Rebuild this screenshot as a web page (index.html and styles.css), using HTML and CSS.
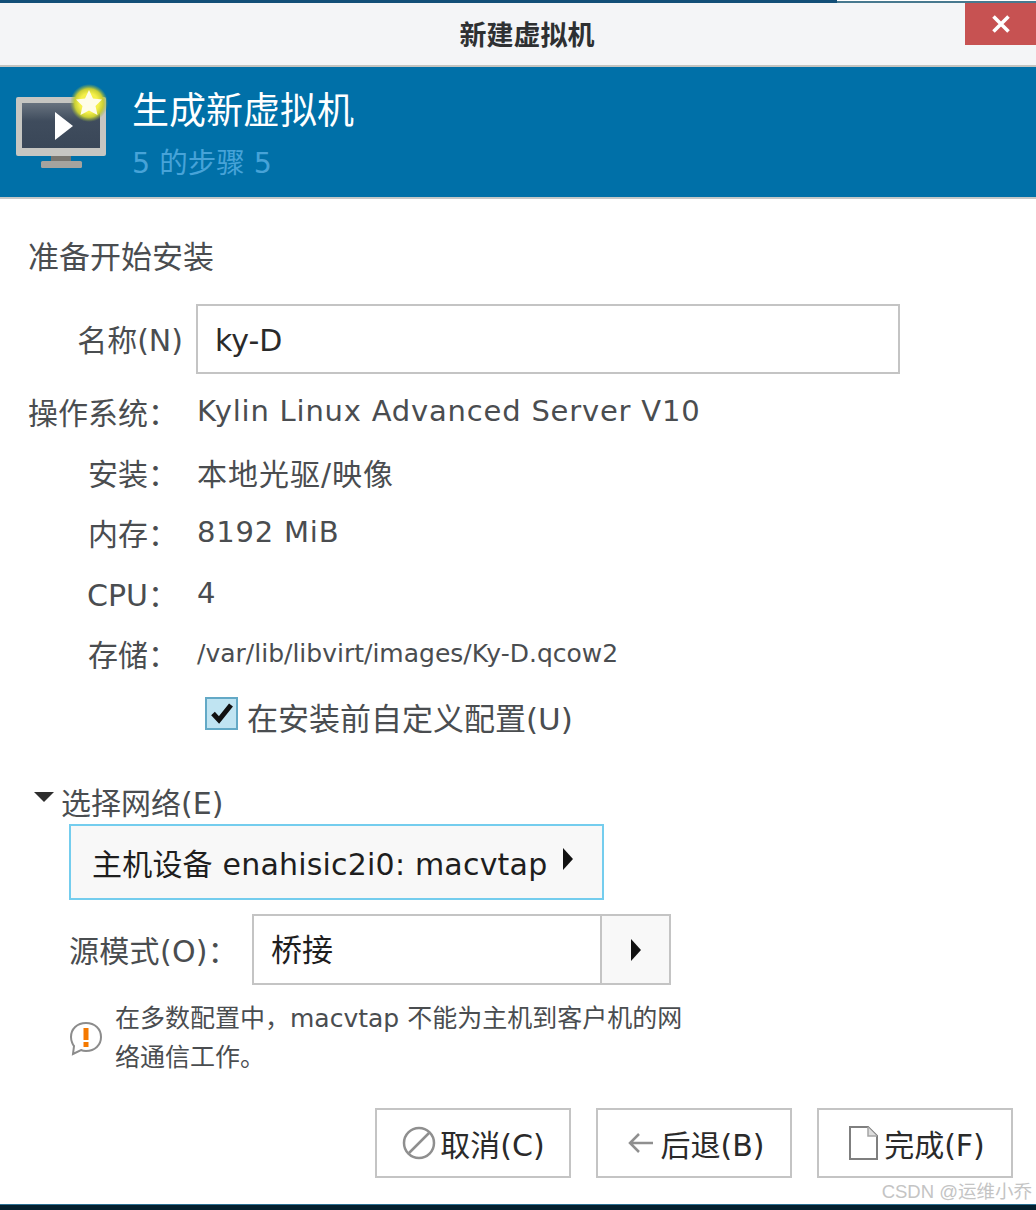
FILE: index.html
```html
<!DOCTYPE html>
<html lang="zh-CN">
<head>
  <meta charset="UTF-8" />
  <title>新建虚拟机</title>
  <link rel="stylesheet" href="styles.css">
</head>
<body>
  <div class="window">
    <!-- Strip of the window behind -->
    <div class="top-strip">
      <div class="strip-left"></div>
      <div class="strip-right"></div>
    </div>

    <!-- Title bar -->
    <div class="titlebar">
      <h1>新建虚拟机</h1>
      <button class="close-btn">
        <svg width="20" height="20" viewBox="0 0 20 20"><path d="M2.500 2.500L17.500 17.500M17.500 2.500L2.500 17.500" stroke="#fff" stroke-width="3.600"/></svg>
      </button>
    </div>

    <!-- Banner -->
    <div class="banner">
      <svg class="banner-icon" width="94" height="90" viewBox="0 0 94 90">
        <defs>
          <linearGradient id="screen" x1="0" y1="0" x2="0" y2="1">
            <stop offset="0" stop-color="#68737f"/>
            <stop offset="0.4" stop-color="#3f4c5d"/>
            <stop offset="1" stop-color="#3a4758"/>
          </linearGradient>
          <radialGradient id="glow">
            <stop offset="0.5" stop-color="#f5f04a"/>
            <stop offset="0.75" stop-color="#c9cf35"/>
            <stop offset="1" stop-color="#8fb040" stop-opacity="0"/>
          </radialGradient>
        </defs>
        <rect x="0" y="14" width="90" height="59" rx="2" fill="#c6c6c2"/>
        <rect x="6" y="20" width="78" height="45" fill="url(#screen)"/>
        <rect x="35" y="73" width="20" height="6" fill="#77756f"/>
        <rect x="25" y="78" width="41" height="7" rx="1.500" fill="#a5a39e"/>
        <path d="M39 29L57 43L39 57Z" fill="#fff"/>
        <circle cx="73" cy="20" r="19" fill="url(#glow)"/>
        <path d="M73 7L77 15.500L86 16.500L79.500 23L81.500 32L73 27.500L64.500 32L66.500 23L60 16.500L69 15.500Z" fill="#fffde8"/>
      </svg>
      <div class="banner-text">
        <div class="banner-title">生成新虚拟机</div>
        <div class="banner-step">5 的步骤 5</div>
      </div>
    </div>

    <!-- Main form -->
    <div class="content">
      <div class="section-title">准备开始安装</div>

      <div class="name-row">
        <label>名称(N)</label>
        <div class="name-input">ky-D</div>
      </div>

      <div class="info-row os-row"><span class="info-label">操作系统&#xFF1A;</span><span class="info-value">Kylin Linux Advanced Server V10</span></div>
      <div class="info-row"><span class="info-label">安装&#xFF1A;</span><span class="info-value cjk">本地光驱/映像</span></div>
      <div class="info-row"><span class="info-label">内存&#xFF1A;</span><span class="info-value">8192 MiB</span></div>
      <div class="info-row"><span class="info-label">CPU&#xFF1A;</span><span class="info-value">4</span></div>
      <div class="info-row"><span class="info-label">存储&#xFF1A;</span><span class="info-value small">/var/lib/libvirt/images/Ky-D.qcow2</span></div>

      <div class="check-row">
        <span class="checkbox">
          <svg width="26" height="26" viewBox="0 0 26 26"><path d="M4 12.500L10 19L22 4" fill="none" stroke="#111" stroke-width="5"/></svg>
        </span>
        <span>在安装前自定义配置(U)</span>
      </div>

      <div class="expander"><span class="arrow-down"></span>选择网络(E)</div>

      <div class="network">
        <button class="device-btn">主机设备 enahisic2i0: macvtap<span class="arrow-right"></span></button>

        <div class="mode-row">
          <label>源模式(O)&#xFF1A;</label>
          <div class="combo">
            <div class="combo-value">桥接</div>
            <div class="combo-btn"><span class="arrow-right"></span></div>
          </div>
        </div>

        <div class="notice">
          <svg width="34" height="36" viewBox="0 0 34 36">
            <path d="M17 3C8 3 2 9 2 17C2 21 4 25 5 26L4 34L12 30C14 31 15 31 17 31C26 31 32 25 32 17C32 9 26 3 17 3Z" fill="#fff" stroke="#8c8c8c" stroke-width="2"/>
            <rect x="14.500" y="8" width="5" height="12" fill="#f57900"/>
            <rect x="14.500" y="22" width="5" height="5" fill="#f57900"/>
          </svg>
          <p>在多数配置中&#xFF0C;macvtap 不能为主机到客户机的网络通信工作。</p>
        </div>
      </div>

      <div class="actions">
        <button class="btn">
          <svg width="36" height="36" viewBox="0 0 36 36"><circle cx="18" cy="18" r="15" fill="none" stroke="#8f8f8f" stroke-width="2.500"/><path d="M8 28L28 8" stroke="#8f8f8f" stroke-width="2.500"/></svg>
          取消(C)
        </button>
        <button class="btn btn-wide">
          <svg width="30" height="26" viewBox="0 0 30 26"><path d="M27 13H5M13 4L4 13L13 22" fill="none" stroke="#8f8f8f" stroke-width="2.500"/></svg>
          后退(B)
        </button>
        <button class="btn btn-wide">
          <svg width="32" height="36" viewBox="0 0 32 36"><path d="M3 2H21L30 11V34H3Z" fill="#fff" stroke="#7f7f7f" stroke-width="2"/><path d="M21 2V11H30" fill="#ddd" stroke="#a5a5a5" stroke-width="1.500"/></svg>
          完成(F)
        </button>
      </div>
    </div>

    <div class="bottom-strip"></div>
    <div class="watermark">CSDN @运维小乔</div>
  </div>
</body>
</html>
```

FILE: styles.css
```css
* {
  margin: 0;
  padding: 0;
  box-sizing: border-box;
  font-family: "DejaVu Sans", "Noto Sans CJK SC", sans-serif;
}

body {
  background: white;
}

.window {
  position: relative;
  width: 1036px;
  height: 1210px;
  display: flex;
  flex-direction: column;
  overflow: hidden;
  color: #4a4d50;
  font-size: 29px;
}

.top-strip {
  display: flex;
  height: 3px;
  flex-shrink: 0;
}

.strip-left {
  width: 837px;
  background: #134f78;
}

.strip-right {
  flex: 1;
  background: #47798f;
  border-top: 1px solid white;
}

.titlebar {
  position: relative;
  height: 64px;
  flex-shrink: 0;
  background: #f4f5f7;
  border-bottom: 2px solid #c4c4c0;
  display: flex;
  align-items: center;
  justify-content: center;
  padding-left: 18px;
}

.titlebar h1 {
  font-size: 27px;
  font-weight: 700;
  color: #2e3032;
  transform: translateY(-1px);
}

.close-btn {
  position: absolute;
  top: 0;
  right: 0;
  width: 71px;
  height: 42px;
  background: #c75252;
  border: none;
  display: flex;
  align-items: center;
  justify-content: center;
}

.banner {
  height: 132px;
  flex-shrink: 0;
  background: #0070a8;
  border-bottom: 2px solid #c4c8c8;
  display: flex;
  align-items: flex-start;
  padding: 16px 0 0 16px;
}

.banner-icon {
  flex-shrink: 0;
}

.banner-text {
  margin-left: 22px;
  margin-top: 4px;
}

.banner-title {
  color: white;
  font-size: 37px;
  line-height: 50px;
}

.banner-step {
  color: #47a3d8;
  font-size: 28.5px;
  line-height: 54px;
}

.content {
  flex: 1;
  padding: 0 23px 0 28px;
  display: flex;
  flex-direction: column;
}

.section-title {
  font-size: 31px;
  line-height: 44px;
  margin-top: 36px;
}

.name-row {
  display: flex;
  align-items: center;
  margin-top: 25px;
  height: 70px;
}

.name-row label {
  width: 155px;
  text-align: right;
  font-size: 30px;
  transform: translateY(-1px);
}

.name-input {
  margin-left: 13px;
  width: 704px;
  height: 70px;
  border: 2px solid #c4c4c4;
  padding-left: 17px;
  line-height: 70px;
  font-size: 30px;
  color: #2a2a2a;
}

.info-row {
  display: flex;
  align-items: center;
  height: 60.5px;
}

.os-row {
  margin-top: 7px;
}

.info-label {
  width: 150px;
  text-align: right;
  font-size: 30px;
}

.info-value {
  margin-left: 19px;
  font-size: 29px;
  letter-spacing: 0.8px;
}

.info-value.cjk {
  font-size: 30px;
  letter-spacing: 1px;
}

.info-value.small {
  font-size: 25px;
  letter-spacing: 0;
}

.check-row {
  display: flex;
  align-items: center;
  gap: 9px;
  margin: 8px 0 0 177px;
  height: 50px;
  font-size: 31px;
}

.checkbox {
  width: 33px;
  height: 33px;
  flex-shrink: 0;
  background: #c0e4f2;
  border: 2px solid #63a9c6;
  display: flex;
  align-items: center;
  justify-content: center;
  transform: translateY(-3px);
}

.expander {
  display: flex;
  align-items: center;
  margin: 36.5px 0 0 6px;
  height: 46px;
  font-size: 30px;
}

.arrow-down {
  width: 0;
  height: 0;
  margin-right: 7px;
  border-left: 10px solid transparent;
  border-right: 10px solid transparent;
  border-top: 10px solid #2e2e2e;
  transform: translateY(-4px);
}

.arrow-right {
  display: inline-block;
  width: 0;
  height: 0;
  border-top: 11px solid transparent;
  border-bottom: 11px solid transparent;
  border-left: 10px solid #111;
}

.network {
  margin-left: 41px;
}

.device-btn {
  display: flex;
  align-items: center;
  width: 535px;
  height: 76px;
  background: #f8f8f8;
  border: 2px solid #74cdee;
  padding-left: 21px;
  font-size: 30px;
  letter-spacing: 0.2px;
  color: #1e1e1e;
}

.device-btn .arrow-right {
  margin-left: 16px;
  transform: translateY(-3px);
}

.mode-row {
  display: flex;
  align-items: center;
  margin-top: 14px;
}

.mode-row label {
  width: 183px;
  font-size: 30px;
  letter-spacing: 0.3px;
  transform: translateY(-1px);
}

.combo {
  display: flex;
  width: 419px;
  height: 71px;
  border: 2px solid #c4c4c4;
}

.combo-value {
  flex: 1;
  padding-left: 17px;
  line-height: 68px;
  font-size: 31px;
  color: #1e1e1e;
}

.combo-btn {
  width: 69px;
  background: #f8f8f8;
  border-left: 2px solid #c4c4c4;
  display: flex;
  align-items: center;
  justify-content: center;
}

.notice {
  display: flex;
  align-items: center;
  margin-top: 14px;
  gap: 12px;
}

.notice p {
  width: 580px;
  font-size: 25px;
  line-height: 39px;
}

.actions {
  display: flex;
  justify-content: flex-end;
  gap: 25px;
  margin-top: 31px;
}

.btn {
  width: 196px;
  height: 70px;
  background: white;
  border: 2px solid #c4c4c4;
  display: flex;
  align-items: center;
  justify-content: center;
  gap: 3px;
  font-size: 30px;
  color: #2a2a2a;
}

.btn-wide {
  gap: 5px;
  padding-left: 2px;
}

.bottom-strip {
  height: 6px;
  flex-shrink: 0;
  margin-top: auto;
  background: #04202e;
  border-top: 1px solid #2c6f92;
}

.watermark {
  position: absolute;
  right: 4px;
  bottom: 7px;
  font-family: "Liberation Sans", "Noto Sans CJK SC", sans-serif;
  font-size: 18.5px;
  color: #c4c4c4;
}
```
